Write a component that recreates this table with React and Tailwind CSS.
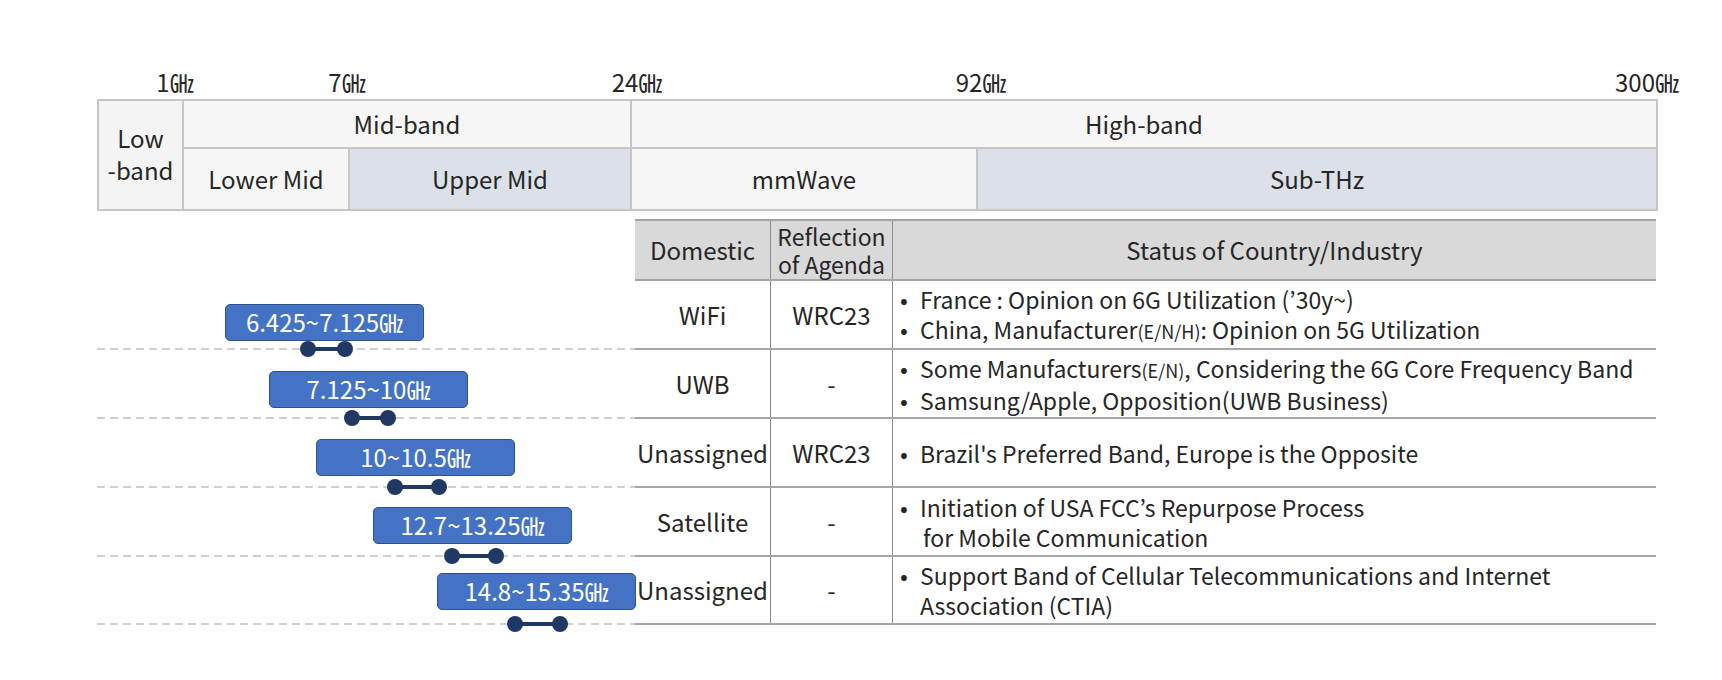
const axis = [
  { w: "w-[86px]", label: "1", shift: "mr-[8px]" },
  { w: "w-[166px]", label: "7", shift: "mr-[2px]" },
  { w: "w-[282px]", label: "24", shift: "-mr-[6px]" },
  { w: "w-[346px]", label: "92", shift: "-mr-[4px]" },
  { w: "w-[681px]", label: "300", shift: "mr-[11px]" },
];

const bands = [
  { text: "6.425~7.125", h: "h-[69px]", mt: "mt-[23px]", ml: "ml-[128px]", dl: "left-[203px]", dw: 53 },
  { text: "7.125~10", h: "h-[69px]", mt: "mt-[21px]", ml: "ml-[172px]", dl: "left-[247px]", dw: 52 },
  { text: "10~10.5", h: "h-[69px]", mt: "mt-[20px]", ml: "ml-[219px]", dl: "left-[290px]", dw: 60 },
  { text: "12.7~13.25", h: "h-[69px]", mt: "mt-[19px]", ml: "ml-[276px]", dl: "left-[347px]", dw: 60 },
  { text: "14.8~15.35", h: "h-[68px]", mt: "mt-[16px]", ml: "ml-[340px]", dl: "left-[410px]", dw: 61 },
];

const rows = [
  {
    h: "h-[69px]",
    domestic: "WiFi",
    agenda: "WRC23",
    items: [
      <>France : Opinion on 6G Utilization (’30y~)</>,
      <>
        China, Manufacturer<span className="text-[18px]">(E/N/H)</span>: Opinion on 5G Utilization
      </>,
    ],
  },
  {
    h: "h-[69px]",
    domestic: "UWB",
    agenda: "-",
    items: [
      <>
        Some Manufacturers<span className="text-[18px]">(E/N)</span>, Considering the 6G Core Frequency Band
      </>,
      <>Samsung/Apple, Opposition(UWB Business)</>,
    ],
  },
  {
    h: "h-[69px]",
    domestic: "Unassigned",
    agenda: "WRC23",
    items: [<>Brazil's Preferred Band, Europe is the Opposite</>],
  },
  {
    h: "h-[69px]",
    domestic: "Satellite",
    agenda: "-",
    items: [
      <>
        Initiation of USA FCC’s Repurpose Process
        <br />
        <span className="pl-[3px]">for Mobile Communication</span>
      </>,
    ],
  },
  {
    h: "h-[68px]",
    domestic: "Unassigned",
    agenda: "-",
    items: [
      <>
        Support Band of Cellular Telecommunications and Internet
        <br />
        Association (CTIA)
      </>,
    ],
  },
];

const Ghz = () => <span>㎓</span>;

const Dumbbell = ({ width }) => (
  <svg width={width} height="16" viewBox={`0 0 ${width} 16`}>
    <line x1="8" y1="8" x2={width - 8} y2="8" stroke="#203864" strokeWidth="4" />
    <circle cx="8" cy="8" r="8" fill="#203864" />
    <circle cx={width - 8} cy="8" r="8" fill="#203864" />
  </svg>
);

const App = () => {
  return (
    <div className="w-[1722px] h-[680px] bg-white text-[#262626] font-['Noto_Sans_CJK_KR','Noto_Sans',sans-serif] pt-[70px] pl-[97px]">
      {/* frequency axis */}
      <div className="flex h-[24px] text-[24px] leading-[24px]">
        {axis.map((a) => (
          <div key={a.label} className={`${a.w} flex justify-end`}>
            <span className={`${a.shift} translate-x-1/2 whitespace-nowrap`}>
              {a.label}
              <Ghz />
            </span>
          </div>
        ))}
      </div>

      {/* band table */}
      <div className="mt-[5px] w-[1561px] grid grid-cols-[83px_164px_280px_344px_678px] grid-rows-[46px_60px] gap-[2px] p-[2px] bg-[#c6c6c6] text-[24px]">
        <div className="row-span-2 bg-[#f4f4f4] flex flex-col items-center justify-center leading-[32px] pb-[2px]">
          <span>Low</span>
          <span>-band</span>
        </div>
        <div className="col-span-2 bg-[#f6f6f6] flex items-center justify-center">Mid-band</div>
        <div className="col-span-2 bg-[#f6f6f6] flex items-center justify-center">High-band</div>
        <div className="bg-[#f6f6f6] flex items-center justify-center">Lower Mid</div>
        <div className="bg-[#dce1e9] flex items-center justify-center">Upper Mid</div>
        <div className="bg-[#f6f6f6] flex items-center justify-center">mmWave</div>
        <div className="bg-[#dce1e9] flex items-center justify-center">Sub-THz</div>
      </div>

      {/* lower section */}
      <div className="mt-[8px] flex">
        {/* frequency ranges */}
        <div className="w-[538px] flex flex-col">
          <div className="h-[62px]" />
          {bands.map((b) => (
            <div key={b.text} className={`${b.h} relative flex flex-col`}>
              <div
                className={`${b.mt} ${b.ml} w-[199px] h-[37px] rounded-[5px] bg-[#4472c4] border-[1.5px] border-[#2f528f] text-white text-[24px] leading-[34px] flex justify-center`}
              >
                <span>
                  {b.text}
                  <Ghz />
                </span>
              </div>
              <div className="mt-auto h-[2px] bg-[repeating-linear-gradient(to_right,#cfcfcf_0px,#cfcfcf_8px,transparent_8px,transparent_13px)]" />
              <div className={`absolute ${b.dl} -bottom-[7px] z-10 flex`}>
                <Dumbbell width={b.dw} />
              </div>
            </div>
          ))}
        </div>

        {/* status table */}
        <div className="w-[1021px] text-[24px]">
          <div className="grid grid-cols-[136px_122px_763px] h-[62px] bg-[#d9d9d9] border-t-2 border-b-2 border-[#a3a3a3]">
            <div className="border-r border-[#8c8c8c] flex items-center justify-center">Domestic</div>
            <div className="border-r border-[#8c8c8c] flex flex-col items-center justify-center leading-[28px] text-[23px]">
              <span>Reflection</span>
              <span>of Agenda</span>
            </div>
            <div className="flex items-center justify-center">Status of Country/Industry</div>
          </div>
          {rows.map((r, i) => (
            <div key={i} className={`${r.h} grid grid-cols-[136px_122px_763px] border-b-2 border-[#a6a6a6]`}>
              <div className="border-r border-[#8c8c8c] flex items-center justify-center">{r.domestic}</div>
              <div className="border-r border-[#8c8c8c] flex items-center justify-center">{r.agenda}</div>
              <div className="flex flex-col justify-center pl-[7px] text-[23px] leading-[30px]">
                {r.items.map((it, j) => (
                  <div key={j} className="flex">
                    <span className="w-[20px] shrink-0">•</span>
                    <span>{it}</span>
                  </div>
                ))}
              </div>
            </div>
          ))}
        </div>
      </div>
    </div>
  );
};

export default App;
